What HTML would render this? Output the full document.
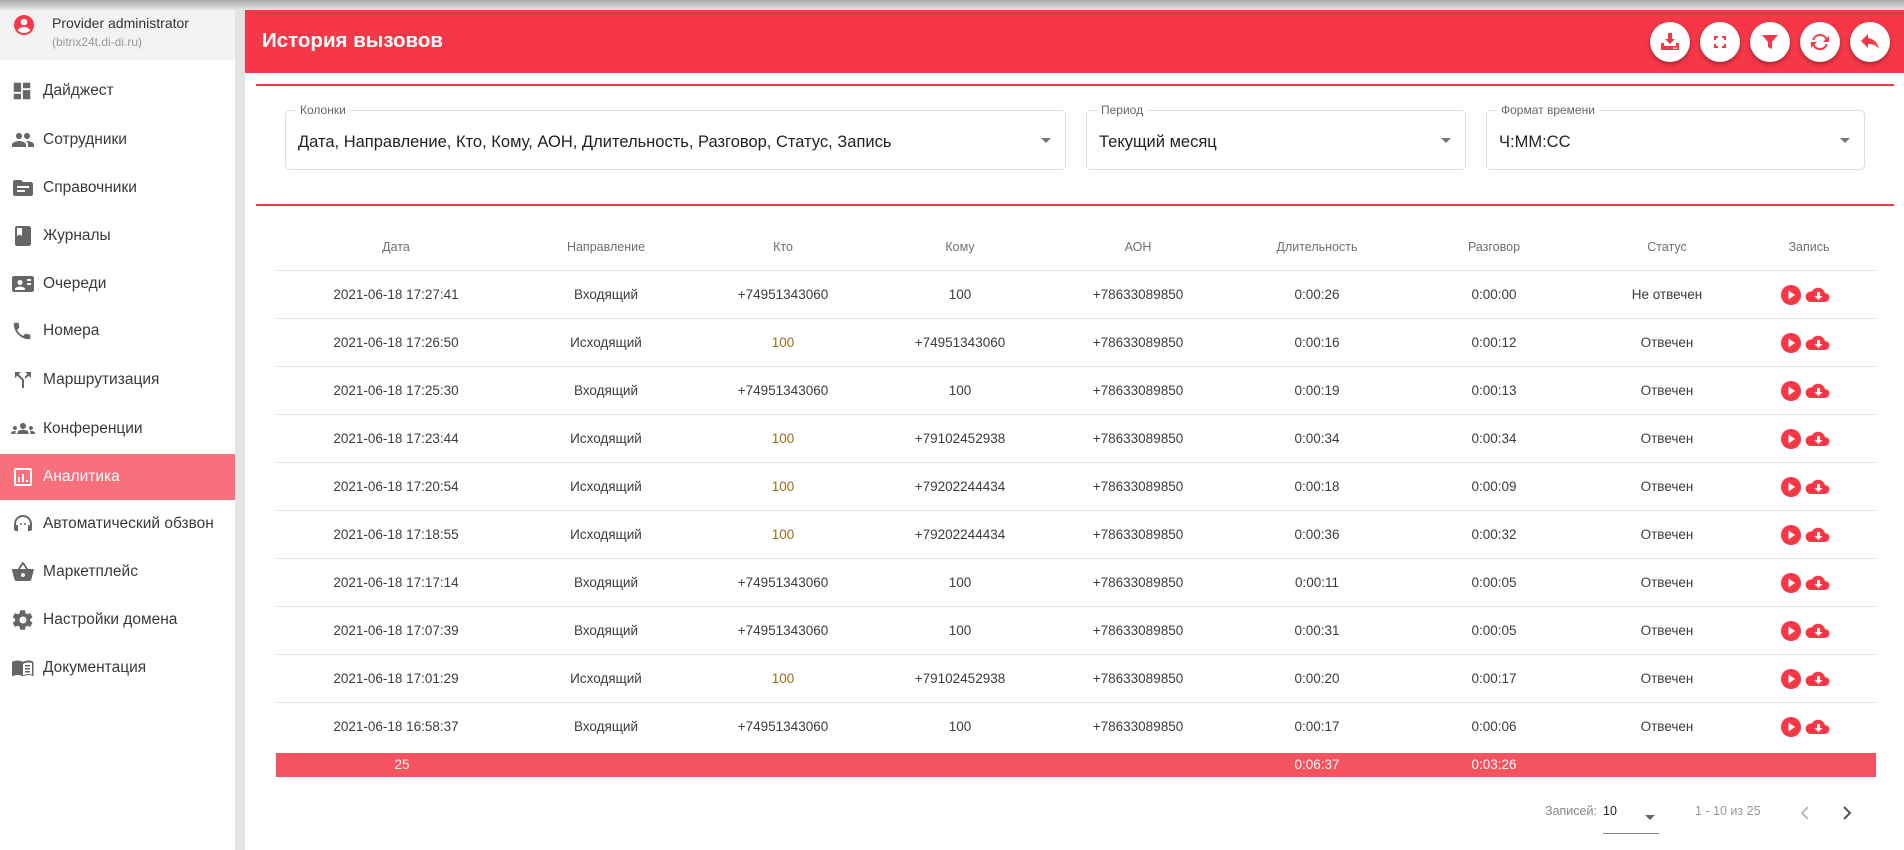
<!DOCTYPE html>
<html><head><meta charset="utf-8"><style>
*{box-sizing:border-box;margin:0;padding:0}
body{width:1904px;height:850px;overflow:hidden;background:#fff;font-family:"Liberation Sans",sans-serif;position:relative;color:#333}
.topbar{position:absolute;left:0;top:0;width:1904px;height:10px;background:linear-gradient(#aaa,#e6e6e6)}
.side{position:absolute;left:0;top:10px;width:235px;height:840px;background:#fff}
.strip{position:absolute;left:235px;top:10px;width:10px;height:840px;background:#e4e4e4}
.user{position:absolute;left:0;top:0;width:235px;height:50px;background:#f3f3f3}
.user .n{position:absolute;left:52px;top:5px;font-size:14px;color:#333}
.user .d{position:absolute;left:52px;top:25px;font-size:12px;color:#999}
.mi{position:absolute;left:0;width:235px;height:46px;font-size:15.5px;color:#3a3a3a}
.mi span{position:absolute;left:43px;top:50%;transform:translateY(-50%)}
.mi svg{position:absolute;left:11px;top:50%;transform:translateY(-50%)}
.mi.act{background:#f7707b;color:#fff}
.hdr{position:absolute;left:245px;top:10px;width:1659px;height:63px;background:#f63748}
.hdr h1{position:absolute;left:17px;top:19px;font-size:20.5px;color:#fff;font-weight:bold}
.btn{position:absolute;top:12px;width:40px;height:40px;border-radius:50%;background:#fff;box-shadow:0 2px 4px rgba(0,0,0,.35)}
.btn svg{position:absolute;left:8px;top:8px}
.rl{position:absolute;left:256px;width:1638px;height:2px;background:#f63748}
.box{position:absolute;top:110px;height:60px;border:1px solid #ddd;border-radius:5px}
.box .l{position:absolute;left:10px;top:-8px;background:#fff;padding:0 4px;font-size:12px;color:#666}
.box .v{position:absolute;left:12px;top:22px;font-size:16.5px;color:#222}
.box .a{position:absolute;right:14px;top:27px;border-left:5px solid transparent;border-right:5px solid transparent;border-top:5px solid #777}
.row{position:absolute;left:276px;width:1600px;height:48px;border-bottom:1px solid #e2e2e2}
.row div{position:absolute;top:0;width:200px;margin-left:-100px;text-align:center;line-height:48px;font-size:13.5px;color:#3c3c3c}
.th div{font-size:12.5px;color:#707070}
.o{color:#a0661c!important}
.foot{position:absolute;left:276px;top:753px;width:1600px;height:24px;background:#f5535f;color:#fff;font-size:13.5px}
.foot div{position:absolute;width:100px;margin-left:-50px;text-align:center;line-height:24px}
.pg{position:absolute;top:800px;font-size:12.5px;color:#888}
</style></head><body>
<div class="topbar"></div>
<div class="side">
 <div class="user">
  <svg style="position:absolute;left:12px;top:3px" width="24" height="24" viewBox="0 0 24 24"><circle cx="12" cy="12" r="10" fill="#f63748"/><circle cx="12" cy="9" r="3.3" fill="#fff"/><path d="M5.8 17.2c1.4-2.2 3.6-3.2 6.2-3.2s4.8 1 6.2 3.2c-1.6 1.8-3.8 2.8-6.2 2.8s-4.6-1-6.2-2.8z" fill="#fff"/></svg>
  <div class="n">Provider administrator</div><div class="d">(bitrix24t.di-di.ru)</div>
 </div>
</div>
<div class="strip"></div>

<div class="mi" style="top:68px"><svg width="22" height="22" viewBox="0 0 24 24"><path d="M3 13h8V3H3zm0 8h8v-6H3zm10 0h8V11h-8zm0-18v6h8V3z" fill="#666"/></svg><span>Дайджест</span></div>
<div class="mi" style="top:117px"><svg width="24" height="24" viewBox="0 0 24 24"><path d="M16 11c1.7 0 3-1.3 3-3s-1.3-3-3-3-3 1.3-3 3 1.3 3 3 3zm-8 0c1.7 0 3-1.3 3-3S9.7 5 8 5 5 6.3 5 8s1.3 3 3 3zm0 2c-2.3 0-7 1.2-7 3.5V19h14v-2.5C15 14.2 10.3 13 8 13zm8 0c-.3 0-.6 0-1 .1 1.2.8 2 2 2 3.4V19h6v-2.5c0-2.3-4.7-3.5-7-3.5z" fill="#666"/></svg><span>Сотрудники</span></div>
<div class="mi" style="top:165px"><svg width="24" height="24" viewBox="0 0 24 24"><path d="M20 6h-8l-2-2H4c-1.1 0-2 .9-2 2v12c0 1.1.9 2 2 2h16c1.1 0 2-.9 2-2V8c0-1.1-.9-2-2-2zm-6 10H6v-2h8zm4-4H6v-2h12z" fill="#666"/></svg><span>Справочники</span></div>
<div class="mi" style="top:213px"><svg width="24" height="24" viewBox="0 0 24 24"><path d="M18 2H6c-1.1 0-2 .9-2 2v16c0 1.1.9 2 2 2h12c1.1 0 2-.9 2-2V4c0-1.1-.9-2-2-2zM6 4h5v8l-2.5-1.5L6 12z" fill="#666"/></svg><span>Журналы</span></div>
<div class="mi" style="top:261px"><svg width="24" height="24" viewBox="0 0 24 24"><path d="M21 4H3c-1.1 0-2 .9-2 2v12c0 1.1.9 2 2 2h18c1.1 0 2-.9 2-2V6c0-1.1-.9-2-2-2zM9 8c1.4 0 2.5 1.1 2.5 2.5S10.4 13 9 13s-2.5-1.1-2.5-2.5S7.6 8 9 8zm5 10H4v-1c0-1.7 3.3-2.5 5-2.5s5 .8 5 2.5zm6-5h-4v-2h4zm0-4h-4V7h4z" fill="#666"/></svg><span>Очереди</span></div>
<div class="mi" style="top:308px"><svg width="22" height="22" viewBox="0 0 24 24"><path d="M6.6 10.8c1.4 2.8 3.8 5.1 6.6 6.6l2.2-2.2c.3-.3.7-.4 1-.2 1.1.4 2.3.6 3.6.6.6 0 1 .4 1 1V20c0 .6-.4 1-1 1C10.6 21 3 13.4 3 4c0-.6.4-1 1-1h3.5c.6 0 1 .4 1 1 0 1.3.2 2.5.6 3.6.1.3 0 .7-.2 1z" fill="#666"/></svg><span>Номера</span></div>
<div class="mi" style="top:357px"><svg width="24" height="24" viewBox="0 0 24 24"><path d="M14 4l2.3 2.3-2.9 2.9 1.4 1.4 2.9-2.9L20 10V4zM10 4H4v6l2.3-2.3 4.7 4.7V20h2v-8.4L7.7 6.3z" fill="#666"/></svg><span>Маршрутизация</span></div>
<div class="mi" style="top:406px"><svg width="24" height="24" viewBox="0 0 24 24"><path d="M12 12.8c1.6 0 3.1.4 4.1.8.9.4 1.4 1.3 1.4 2.3V17h-11v-1.1c0-1 .6-1.9 1.4-2.3 1-.4 2.4-.8 4.1-.8zM4 13c1.1 0 2-.9 2-2s-.9-2-2-2-2 .9-2 2 .9 2 2 2zm1.1 1.1C4.8 14 4.4 14 4 14c-1 0-1.9.2-2.8.6-.7.3-1.2 1-1.2 1.9V17h4.5v-1.6c0-.5.2-1 .6-1.3zM20 13c1.1 0 2-.9 2-2s-.9-2-2-2-2 .9-2 2 .9 2 2 2zm4 3.4c0-.8-.5-1.5-1.2-1.9-.9-.4-1.8-.6-2.8-.6-.4 0-.8 0-1.1.1.4.4.6.9.6 1.4V17H24zM12 6c1.7 0 3 1.3 3 3s-1.3 3-3 3-3-1.3-3-3 1.3-3 3-3z" fill="#666"/></svg><span>Конференции</span></div>
<div class="mi act" style="top:454px"><svg width="24" height="24" viewBox="0 0 24 24"><path d="M19 3H5c-1.1 0-2 .9-2 2v14c0 1.1.9 2 2 2h14c1.1 0 2-.9 2-2V5c0-1.1-.9-2-2-2zm0 16H5V5h14zM7 12h2v5H7zm4-3h2v8h-2zm4 6h2v2h-2z" fill="#fff"/></svg><span>Аналитика</span></div>
<div class="mi" style="top:501px"><svg width="24" height="24" viewBox="0 0 24 24"><path d="M12 3a9 9 0 0 0-9 9v5c0 1.1.9 2 2 2h2v-6H5v-1a7 7 0 0 1 14 0v1h-2v6h2c1.1 0 2-.9 2-2v-5a9 9 0 0 0-9-9z" fill="#666"/><circle cx="10" cy="12" r="1" fill="#666"/><circle cx="14" cy="12" r="1" fill="#666"/></svg><span>Автоматический обзвон</span></div>
<div class="mi" style="top:549px"><svg width="24" height="24" viewBox="0 0 24 24"><path d="M17.2 9l-4.4-6.6c-.4-.6-1.3-.6-1.7 0L6.8 9H2c-.6 0-1 .4-1 1v.3l2.5 9.3c.2.8 1 1.4 1.9 1.4h13c.9 0 1.7-.6 1.9-1.5l2.5-9.3V10c0-.6-.4-1-1-1zM9 9l3-4.4L15 9zm3 8c-1.1 0-2-.9-2-2s.9-2 2-2 2 .9 2 2-.9 2-2 2z" fill="#666"/></svg><span>Маркетплейс</span></div>
<div class="mi" style="top:597px"><svg width="24" height="24" viewBox="0 0 24 24"><path d="M19.1 12.9c0-.3.1-.6.1-.9s0-.6-.1-.9l2.1-1.6c.2-.2.2-.4.1-.6l-2-3.5c-.1-.2-.4-.3-.6-.2l-2.5 1c-.5-.4-1.1-.7-1.7-1l-.4-2.6c0-.2-.2-.4-.5-.4h-4c-.2 0-.4.2-.5.4l-.4 2.6c-.6.3-1.2.6-1.700 1l-2.5-1c-.2-.1-.5 0-.6.2l-2 3.5c-.1.2-.1.5.1.6l2.1 1.6c0 .3-.1.6-.1.9s0 .6.1.9l-2.1 1.6c-.2.2-.2.4-.1.6l2 3.5c.1.2.4.3.6.2l2.5-1c.5.4 1.1.7 1.7 1l.4 2.6c0 .2.2.4.5.4h4c.2 0 .5-.2.5-.4l.4-2.6c.6-.3 1.2-.6 1.7-1l2.5 1c.2.1.5 0 .6-.2l2-3.5c.1-.2.1-.5-.1-.6zM12 15.5c-1.9 0-3.5-1.6-3.5-3.5s1.6-3.5 3.5-3.5 3.5 1.6 3.5 3.5-1.6 3.5-3.5 3.5z" fill="#666"/></svg><span>Настройки домена</span></div>
<div class="mi" style="top:645px"><svg width="24" height="24" viewBox="0 0 24 24"><path d="M21 5c-1.1-.3-2.3-.5-3.5-.5-1.9 0-4.1.4-5.5 1.5-1.4-1.1-3.6-1.5-5.5-1.5S2.4 4.9 1 6v14.6c1.4-1.1 3.6-1.6 5.5-1.6s4.1.4 5.5 1.5c1.4-.9 3.8-1.5 5.5-1.5 1.7 0 3.4.3 4.8 1.1.1 0 .2.1.2.1V6c-.6-.4-1.2-.7-2-1zm0 13.5c-1.1-.3-2.3-.5-3.5-.5-1.7 0-4.1.7-5.5 1.5V8c1.4-.9 3.8-1.5 5.5-1.5 1.2 0 2.4.2 3.5.5zM14 9h5v1.5h-5zm0 3h5v1.5h-5zm0 3h5v1.5h-5z" fill="#666"/></svg><span>Документация</span></div>

<div class="hdr"><h1>История вызовов</h1>
 <div class="btn" style="left:1405px"><svg width="24" height="24" viewBox="0 0 24 24"><path d="M10 3h4v6h3l-5 5-5-5h3z" fill="#f63748"/><path d="M3 13h3v3h12v-3h3v7H3z" fill="#f63748"/><rect x="15" y="17.5" width="1.5" height="1.5" fill="#fff"/><rect x="17.5" y="17.5" width="1.5" height="1.5" fill="#fff"/></svg></div>
 <div class="btn" style="left:1455px"><svg width="24" height="24" viewBox="0 0 24 24"><path d="M6 6h4v2H8v2H6zm8 0h4v4h-2V8h-2zM6 14h2v2h2v2H6zm10 0h2v4h-4v-2h2z" fill="#f63748"/></svg></div>
 <div class="btn" style="left:1505px"><svg width="24" height="24" viewBox="0 0 24 24"><path d="M4 5h16l-6 7v7l-4-2v-5z" fill="#f63748"/></svg></div>
 <div class="btn" style="left:1555px"><svg width="24" height="24" viewBox="0 0 24 24"><path d="M12 4a8 8 0 0 1 6.9 4L21 6v6h-6l2.5-2.5A6 6 0 0 0 6.3 10H4.2A8 8 0 0 1 12 4zm-7.1 12L3 18v-6h6l-2.5 2.5A6 6 0 0 0 17.7 14h2.1A8 8 0 0 1 4.9 16z" fill="#f63748"/></svg></div>
 <div class="btn" style="left:1605px"><svg width="24" height="24" viewBox="0 0 24 24"><path d="M10 8V4l-7 7 7 7v-4.1c5 0 8.5 1.6 11 5.1-1-5-4-10-11-11z" fill="#f63748"/></svg></div>
</div>

<div class="rl" style="top:84px"></div>
<div class="box" style="left:285px;width:781px"><div class="l">Колонки</div><div class="v">Дата, Направление, Кто, Кому, АОН, Длительность, Разговор, Статус, Запись</div><div class="a"></div></div>
<div class="box" style="left:1086px;width:380px"><div class="l">Период</div><div class="v">Текущий месяц</div><div class="a"></div></div>
<div class="box" style="left:1486px;width:379px"><div class="l">Формат времени</div><div class="v">Ч:ММ:СС</div><div class="a"></div></div>
<div class="rl" style="top:204px"></div>

<div class="row th" style="top:223px"><div style="left:120px">Дата</div><div style="left:330px">Направление</div><div style="left:507px">Кто</div><div style="left:684px">Кому</div><div style="left:862px">АОН</div><div style="left:1041px">Длительность</div><div style="left:1218px">Разговор</div><div style="left:1391px">Статус</div><div style="left:1533px">Запись</div></div>

<svg width="0" height="0" style="position:absolute"><defs><g id="rec"><circle cx="10" cy="10" r="10" fill="#f63748"/><path d="M7.5 5.5l6.5 4.5-6.5 4.5z" fill="#fff"/><path d="M31 6.5a7 7 0 0 1 13 1.5 4.5 4.5 0 0 1 0 9H29a5 5 0 0 1 2-10.5z" fill="#f63748"/><path d="M36 7h3v4h2.5L37.5 15 33.5 11H36z" fill="#fff"/></g></defs></svg>

<div class="row" style="top:271px"><div style="left:120px">2021-06-18 17:27:41</div><div style="left:330px">Входящий</div><div style="left:507px">+74951343060</div><div style="left:684px">100</div><div style="left:862px">+78633089850</div><div style="left:1041px">0:00:26</div><div style="left:1218px">0:00:00</div><div style="left:1391px">Не отвечен</div><svg style="position:absolute;left:1505px;top:14px" width="60" height="22"><use href="#rec"/></svg></div>
<div class="row" style="top:319px"><div style="left:120px">2021-06-18 17:26:50</div><div style="left:330px">Исходящий</div><div style="left:507px" class="o">100</div><div style="left:684px">+74951343060</div><div style="left:862px">+78633089850</div><div style="left:1041px">0:00:16</div><div style="left:1218px">0:00:12</div><div style="left:1391px">Отвечен</div><svg style="position:absolute;left:1505px;top:14px" width="60" height="22"><use href="#rec"/></svg></div>
<div class="row" style="top:367px"><div style="left:120px">2021-06-18 17:25:30</div><div style="left:330px">Входящий</div><div style="left:507px">+74951343060</div><div style="left:684px">100</div><div style="left:862px">+78633089850</div><div style="left:1041px">0:00:19</div><div style="left:1218px">0:00:13</div><div style="left:1391px">Отвечен</div><svg style="position:absolute;left:1505px;top:14px" width="60" height="22"><use href="#rec"/></svg></div>
<div class="row" style="top:415px"><div style="left:120px">2021-06-18 17:23:44</div><div style="left:330px">Исходящий</div><div style="left:507px" class="o">100</div><div style="left:684px">+79102452938</div><div style="left:862px">+78633089850</div><div style="left:1041px">0:00:34</div><div style="left:1218px">0:00:34</div><div style="left:1391px">Отвечен</div><svg style="position:absolute;left:1505px;top:14px" width="60" height="22"><use href="#rec"/></svg></div>
<div class="row" style="top:463px"><div style="left:120px">2021-06-18 17:20:54</div><div style="left:330px">Исходящий</div><div style="left:507px" class="o">100</div><div style="left:684px">+79202244434</div><div style="left:862px">+78633089850</div><div style="left:1041px">0:00:18</div><div style="left:1218px">0:00:09</div><div style="left:1391px">Отвечен</div><svg style="position:absolute;left:1505px;top:14px" width="60" height="22"><use href="#rec"/></svg></div>
<div class="row" style="top:511px"><div style="left:120px">2021-06-18 17:18:55</div><div style="left:330px">Исходящий</div><div style="left:507px" class="o">100</div><div style="left:684px">+79202244434</div><div style="left:862px">+78633089850</div><div style="left:1041px">0:00:36</div><div style="left:1218px">0:00:32</div><div style="left:1391px">Отвечен</div><svg style="position:absolute;left:1505px;top:14px" width="60" height="22"><use href="#rec"/></svg></div>
<div class="row" style="top:559px"><div style="left:120px">2021-06-18 17:17:14</div><div style="left:330px">Входящий</div><div style="left:507px">+74951343060</div><div style="left:684px">100</div><div style="left:862px">+78633089850</div><div style="left:1041px">0:00:11</div><div style="left:1218px">0:00:05</div><div style="left:1391px">Отвечен</div><svg style="position:absolute;left:1505px;top:14px" width="60" height="22"><use href="#rec"/></svg></div>
<div class="row" style="top:607px"><div style="left:120px">2021-06-18 17:07:39</div><div style="left:330px">Входящий</div><div style="left:507px">+74951343060</div><div style="left:684px">100</div><div style="left:862px">+78633089850</div><div style="left:1041px">0:00:31</div><div style="left:1218px">0:00:05</div><div style="left:1391px">Отвечен</div><svg style="position:absolute;left:1505px;top:14px" width="60" height="22"><use href="#rec"/></svg></div>
<div class="row" style="top:655px"><div style="left:120px">2021-06-18 17:01:29</div><div style="left:330px">Исходящий</div><div style="left:507px" class="o">100</div><div style="left:684px">+79102452938</div><div style="left:862px">+78633089850</div><div style="left:1041px">0:00:20</div><div style="left:1218px">0:00:17</div><div style="left:1391px">Отвечен</div><svg style="position:absolute;left:1505px;top:14px" width="60" height="22"><use href="#rec"/></svg></div>
<div class="row" style="top:703px;border-bottom:none"><div style="left:120px">2021-06-18 16:58:37</div><div style="left:330px">Входящий</div><div style="left:507px">+74951343060</div><div style="left:684px">100</div><div style="left:862px">+78633089850</div><div style="left:1041px">0:00:17</div><div style="left:1218px">0:00:06</div><div style="left:1391px">Отвечен</div><svg style="position:absolute;left:1505px;top:14px" width="60" height="22"><use href="#rec"/></svg></div>

<div class="foot"><div style="left:126px">25</div><div style="left:1041px">0:06:37</div><div style="left:1218px">0:03:26</div></div>

<div class="pg" style="left:1545px;top:804px">Записей:</div>
<div class="pg" style="left:1603px;top:804px;color:#222">10</div>
<div style="position:absolute;left:1645px;top:815px;border-left:5px solid transparent;border-right:5px solid transparent;border-top:5px solid #666"></div>
<div style="position:absolute;left:1603px;top:833px;width:56px;height:1px;background:#888"></div>
<div class="pg" style="left:1695px;top:804px;color:#999">1 - 10 из 25</div>
<svg style="position:absolute;left:1798px;top:805px" width="14" height="16" viewBox="0 0 14 16"><path d="M10 2L4 8l6 6" stroke="#bbb" stroke-width="2" fill="none"/></svg>
<svg style="position:absolute;left:1840px;top:805px" width="14" height="16" viewBox="0 0 14 16"><path d="M4 2l6 6-6 6" stroke="#555" stroke-width="2" fill="none"/></svg>
</body></html>
